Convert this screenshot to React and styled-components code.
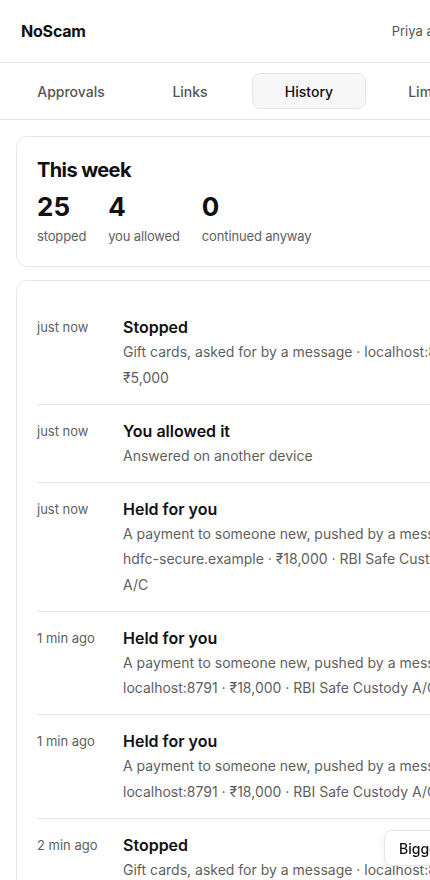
import React from "react";
import styled, { createGlobalStyle } from "styled-components";

const Global = createGlobalStyle`
  html, body { margin: 0; padding: 0; background: #fff; }
  body { font-family: Inter, "Noto Sans", sans-serif; color: #111; -webkit-font-smoothing: antialiased; }
  * { box-sizing: border-box; }
`;

const Page = styled.div`
  width: 510px;
  min-height: 880px;
`;

const Header = styled.header`
  height: 63px;
  display: flex;
  align-items: center;
  justify-content: space-between;
  padding: 0 20px 0 21px;
  border-bottom: 1px solid #e7e7e7;
`;

const Brand = styled.div`
  font-size: 16px;
  font-weight: 700;
  letter-spacing: -0.2px;
`;

const User = styled.div`
  font-size: 13px;
  color: #555;
`;

const Tabs = styled.nav`
  display: grid;
  grid-template-columns: repeat(4, 114px);
  gap: 5px;
  padding: 10px 14px;
  border-bottom: 1px solid #e7e7e7;
`;

const Tab = styled.button`
  height: 36px;
  border-radius: 8px;
  border: 1px solid ${(p) => (p.$active ? "#e6e6e6" : "transparent")};
  background: ${(p) => (p.$active ? "#f7f7f7" : "transparent")};
  font-family: inherit;
  font-size: 14px;
  font-weight: 500;
  color: ${(p) => (p.$active ? "#111" : "#555")};
  cursor: pointer;
`;

const Main = styled.main`
  padding: 16px 16px 0 16px;
  display: flex;
  flex-direction: column;
  gap: 13px;
`;

const Card = styled.section`
  border: 1px solid #e7e7e7;
  border-radius: 12px;
  padding: ${(p) => p.$pad || "19px 20px 21px"};
  background: #fff;
`;

const CardTitle = styled.h2`
  margin: 0;
  font-size: 20px;
  line-height: 28px;
  font-weight: 700;
  letter-spacing: -0.6px;
`;

const Stats = styled.div`
  display: flex;
  gap: 22px;
  margin-top: 8px;
`;

const Stat = styled.div`
  display: flex;
  flex-direction: column;
`;

const StatNum = styled.div`
  font-size: 26px;
  line-height: 30px;
  font-weight: 700;
`;

const StatLabel = styled.div`
  margin-top: 5px;
  font-size: 13px;
  line-height: 18px;
  letter-spacing: -0.15px;
  color: #5f5f5f;
`;

const Row = styled.div`
  display: grid;
  grid-template-columns: 72px 1fr;
  column-gap: 14px;
  padding: 14px 0 13.5px;
  border-top: 1px solid ${(p) => (p.$first ? "transparent" : "#e7e7e7")};
`;

const Time = styled.div`
  font-size: 13px;
  line-height: 24px;
  color: #5f5f5f;
`;

const RowTitle = styled.div`
  font-size: 16px;
  line-height: 24px;
  font-weight: 600;
`;

const Desc = styled.div`
  font-size: 14px;
  line-height: 25.5px;
  color: #5f5f5f;
`;

const Floating = styled.button`
  position: fixed;
  left: 384px;
  bottom: 14px;
  height: 36px;
  padding: 0 14px;
  border-radius: 8px;
  border: 1px solid #e6e6e6;
  background: #fff;
  box-shadow: 0 2px 8px rgba(0, 0, 0, 0.06);
  font-family: inherit;
  font-size: 14px;
  font-weight: 500;
  color: #111;
  white-space: nowrap;
`;

const S = "\u00a0· ";

const events = [
  { time: "just now", title: "Stopped", desc: `Gift cards, asked for by a message${S}localhost:8791${S}₹5,000` },
  { time: "just now", title: "You allowed it", desc: "Answered on another device" },
  { time: "just now", title: "Held for you", desc: `A payment to someone new, pushed by a message${S}hdfc-secure.example${S}₹18,000${S}RBI Safe Custody A/C` },
  { time: "1 min ago", title: "Held for you", desc: `A payment to someone new, pushed by a message${S}localhost:8791${S}₹18,000${S}RBI Safe Custody A/C` },
  { time: "1 min ago", title: "Held for you", desc: `A payment to someone new, pushed by a message${S}localhost:8791${S}₹18,000${S}RBI Safe Custody A/C` },
  { time: "2 min ago", title: "Stopped", desc: `Gift cards, asked for by a message${S}localhost:8791${S}₹5,000` },
];

export default function App() {
  return (
    <Page>
      <Global />
      <Header>
        <Brand>NoScam</Brand>
        <User>Priya and family</User>
      </Header>
      <Tabs>
        <Tab>Approvals</Tab>
        <Tab>Links</Tab>
        <Tab $active>History</Tab>
        <Tab>Limits</Tab>
      </Tabs>
      <Main>
        <Card>
          <CardTitle>This week</CardTitle>
          <Stats>
            <Stat><StatNum>25</StatNum><StatLabel>stopped</StatLabel></Stat>
            <Stat><StatNum>4</StatNum><StatLabel>you allowed</StatLabel></Stat>
            <Stat><StatNum>0</StatNum><StatLabel>continued anyway</StatLabel></Stat>
          </Stats>
        </Card>
        <Card $pad="19px 20px 6px">
          {events.map((e, i) => (
            <Row key={i} $first={i === 0}>
              <Time>{e.time}</Time>
              <div>
                <RowTitle>{e.title}</RowTitle>
                <Desc>{e.desc}</Desc>
              </div>
            </Row>
          ))}
        </Card>
      </Main>
      <Floating>Bigger text</Floating>
    </Page>
  );
}
